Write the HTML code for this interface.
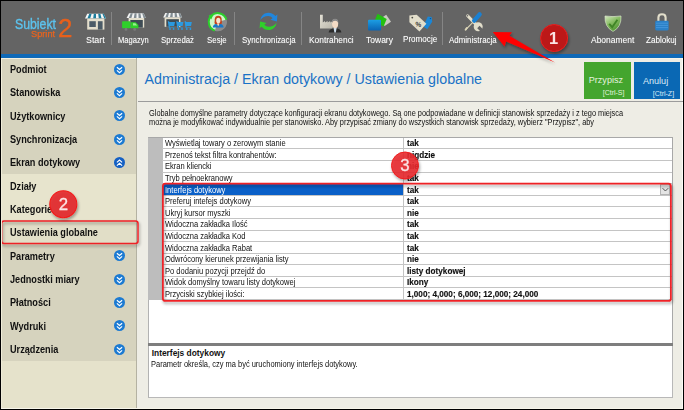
<!DOCTYPE html>
<html lang="pl">
<head>
<meta charset="utf-8">
<title>Subiekt Sprint 2 - Administracja</title>
<style>
html,body{margin:0;padding:0;}
body{width:684px;height:410px;overflow:hidden;background:#000;position:relative;font-family:"Liberation Sans",sans-serif;}
.abs{position:absolute;}
#win{position:absolute;left:1px;top:1px;width:682px;height:408px;background:#eeede5;overflow:hidden;}
#toolbar{position:absolute;left:0;top:0;width:682px;height:52.5px;background:#646464;}
#strip{position:absolute;left:0;top:52.5px;width:682px;height:4.5px;background:#0f69b7;}
.tl{position:absolute;top:33.9px;height:10px;line-height:10px;font-size:8.6px;color:#fff;white-space:nowrap;transform-origin:0 50%;text-shadow:0 0 1px rgba(255,255,255,.35);}
.sep{position:absolute;top:11px;width:1px;height:33px;background:#858585;}
#side{position:absolute;left:0;top:56.5px;width:135.2px;height:351.5px;background:#e5e2cb;border-right:1px solid #b4b2a2;}
.si{position:absolute;left:0;width:135.2px;height:23.9px;background:#d6d3be;}
.si.sub{background:#e7e4cd;}
.si span{position:absolute;left:8.7px;top:.5px;line-height:23.33px;font-size:10px;font-weight:bold;color:#111;white-space:nowrap;transform-origin:0 50%;transform:scaleX(.915);}
.chev{position:absolute;left:113px;top:6.2px;width:11px;height:11px;}
#title{position:absolute;left:143.6px;top:68px;font-size:14.25px;line-height:20px;color:#1a72c6;white-space:nowrap;}
#hr{position:absolute;left:136.5px;top:100px;width:546px;height:1px;background:#9c9c9c;}
.btn{position:absolute;top:61px;height:37px;color:#e4f3df;}
.btn .t{position:absolute;font-size:9.1px;line-height:10px;white-space:nowrap;}
.btn .k{position:absolute;font-size:7px;line-height:8px;white-space:nowrap;}
.desc{position:absolute;left:148px;font-size:8.7px;line-height:10px;color:#111;white-space:nowrap;transform-origin:0 50%;transform:scaleX(.85);}
#grid{position:absolute;left:146.8px;top:135.8px;width:524.8px;height:206.7px;background:#fff;border:1px solid #a8a8a8;border-left:1px solid #b2b2b2;border-bottom:none;box-sizing:border-box;}
#gcol{position:absolute;left:-.4px;top:0;width:14.1px;height:162.5px;background:#bdbdbd;}
.row{position:absolute;left:13.7px;width:509.1px;height:11.59px;border-bottom:1px solid #c4c4c4;box-sizing:border-box;}
.row .n{position:absolute;left:2.2px;top:.5px;font-size:8.7px;line-height:11px;white-space:nowrap;color:#111;transform-origin:0 50%;transform:scaleX(.868);}
.row .v{position:absolute;left:244.4px;top:.5px;font-size:8.3px;line-height:11px;font-weight:bold;white-space:nowrap;color:#111;transform-origin:0 50%;transform:scaleX(.985);-webkit-text-stroke:.15px #111;}
.row.sel .n{color:#fff;}
.row.sel .nb{position:absolute;left:.8px;top:0;width:239.7px;height:11.2px;background:#0a60c8;}
#dd{position:absolute;left:497.6px;top:.3px;width:10.2px;height:10.4px;background:#e4e4e4;border:1px solid #b4b4b4;box-sizing:border-box;}
#vdiv{position:absolute;left:254.2px;top:0;width:1px;height:162.5px;background:#c4c4c4;}
#split{position:absolute;left:146.8px;top:342px;width:524.8px;height:2.5px;background:#7e7e7e;}
#info{position:absolute;left:146.8px;top:344.5px;width:524.8px;height:52px;background:#fff;border:1px solid #b8b8b8;border-left:1px solid #b2b2b2;border-top:none;box-sizing:border-box;}
</style>
</head>
<body>
<div id="win">
  <div id="toolbar">
    <div class="abs" id="logo" style="left:0;top:0;width:80px;height:52px;">
      <div class="abs" style="left:14.3px;top:15.4px;font-size:13.9px;line-height:16px;color:#5cc3ee;white-space:nowrap;transform-origin:0 50%;transform:scaleX(.885);-webkit-text-stroke:.35px #5cc3ee;">Subiekt</div>
      <div class="abs" style="left:30.3px;top:26.8px;font-size:8.7px;line-height:12px;color:#e8641f;white-space:nowrap;transform-origin:0 50%;transform:scaleX(1.06);-webkit-text-stroke:.25px #e8641f;">Sprint</div>
      <div class="abs" style="left:56.8px;top:13.2px;font-size:25px;line-height:28px;color:#e8601c;white-space:nowrap;transform-origin:0 50%;transform:scaleX(1.04);-webkit-text-stroke:.3px #e8601c;">2</div>
    </div>

    <svg class="abs" style="left:-1px;top:-1px;" width="684" height="54" viewBox="0 0 684 54">
      <defs>
        <linearGradient id="gBlue" x1="0" y1="0" x2="0" y2="1"><stop offset="0" stop-color="#1c9ee4"/><stop offset="1" stop-color="#0a64b4"/></linearGradient>
        <linearGradient id="gShield" x1="0" y1="0" x2="0.6" y2="1"><stop offset="0" stop-color="#d4e8c0"/><stop offset=".5" stop-color="#86bc62"/><stop offset="1" stop-color="#4e9430"/></linearGradient>
        <linearGradient id="gFac" x1="0" y1="0" x2="1" y2="1"><stop offset="0" stop-color="#e4e1d6"/><stop offset="1" stop-color="#b9b6aa"/></linearGradient>
      </defs>
      <!-- Start -->
      <g>
        <polygon points="87.2,13.8 103.7,13.8 106.1,18.6 85,18.6" fill="#f4f6f6"/>
        <polygon points="89.3,13.8 91.6,13.8 90.2,18.6 87.4,18.6" fill="#1c7c9c"/>
        <polygon points="93.8,13.8 96,13.8 96,18.6 93.2,18.6" fill="#1c7c9c"/>
        <polygon points="98.2,13.8 100.4,13.8 101.6,18.6 98.8,18.6" fill="#1c7c9c"/>
        <polygon points="102.4,13.8 103.7,13.8 106.1,18.6 104.3,18.6" fill="#1c7c9c"/>
        <rect x="87.2" y="18.6" width="17.2" height="11" fill="#e4dfcd"/>
        <rect x="89.3" y="21.2" width="6.5" height="5.8" fill="#4c5c68"/>
        <rect x="97.9" y="21.2" width="4.7" height="8.4" fill="#4c5c68"/>
      </g>
      <!-- Magazyn -->
      <g>
        <polygon points="129,13.3 143.7,13.3 145.8,18 126.6,18" fill="#f2f3f3"/>
        <polygon points="130.8,13.3 132.8,13.3 131.4,18 128.8,18" fill="#818c92"/>
        <polygon points="134.6,13.3 136.6,13.3 136.4,18 133.8,18" fill="#818c92"/>
        <polygon points="138.4,13.3 140.4,13.3 141.2,18 138.6,18" fill="#818c92"/>
        <polygon points="142.2,13.3 143.7,13.3 145.8,18 143.6,18" fill="#818c92"/>
        <rect x="128.6" y="18" width="15.6" height="9.6" fill="#e4dfcd"/>
        <rect x="130.3" y="20" width="12.5" height="7.6" fill="#3e4b54"/>
        <rect x="122.1" y="21.2" width="8.2" height="7" rx=".6" fill="#2fd02a"/>
        <path d="M130.6 28.2 L130.6 22.2 L135.6 22.2 L138.4 25 L138.4 28.2 Z" fill="#2fd02a"/>
        <path d="M133 23.2 L135.3 23.2 L137.2 25.4 L133 25.4 Z" fill="#9cf090"/>
        <circle cx="126" cy="29.4" r="1.4" fill="#7c7c7c"/>
        <circle cx="134.7" cy="29.4" r="1.4" fill="#7c7c7c"/>
      </g>
      <!-- Sprzedaz -->
      <g>
        <polygon points="165.3,13 180,13 182.1,17.4 163.2,17.4" fill="#f2f3f3"/>
        <polygon points="167,13 169,13 167.8,17.4 165.2,17.4" fill="#818c92"/>
        <polygon points="170.8,13 172.8,13 172.6,17.4 170,17.4" fill="#818c92"/>
        <polygon points="174.6,13 176.6,13 177.4,17.4 174.8,17.4" fill="#818c92"/>
        <polygon points="178.4,13 180,13 182.1,17.4 179.8,17.4" fill="#818c92"/>
        <rect x="164.6" y="17.4" width="15.8" height="9.4" fill="#e4dfcd"/>
        <rect x="166.3" y="19.2" width="12.6" height="7.6" fill="#3e4b54"/>
        <g fill="#2b9ae0">
          <path d="M167.8 21.2 L169 21.2 L169.4 22 L175 22 L174.2 26 L169.8 26 L169.6 27.4 L174.4 27.4 L174.4 28 L168.8 28 Z"/>
          <circle cx="170" cy="29" r=".9"/><circle cx="173.6" cy="29" r=".9"/>
          <path d="M176.2 21.2 L177.4 21.2 L177.8 22 L183.4 22 L182.6 26 L178.2 26 L178 27.4 L182.8 27.4 L182.8 28 L177.2 28 Z"/>
          <circle cx="178.4" cy="29" r=".9"/><circle cx="182" cy="29" r=".9"/>
          <path d="M184.6 21.2 L185.8 21.2 L186.2 22 L191.8 22 L191 26 L186.6 26 L186.4 27.4 L191.2 27.4 L191.2 28 L185.6 28 Z"/>
          <circle cx="186.8" cy="29" r=".9"/><circle cx="190.4" cy="29" r=".9"/>
        </g>
      </g>
      <!-- Sesje -->
      <g>
        <circle cx="217.7" cy="22" r="8.6" fill="#cdf6cb"/>
        <path d="M217.7 22 L226.6 19.5 A9.3 9.3 0 0 1 214.8 30.8 Z" fill="#8c8c8c"/>
        <path d="M214.8 30.6 A9 9 0 1 1 226.4 19.6" fill="none" stroke="#2bd02b" stroke-width="2"/>
        <path d="M208.6 15.2 L213.6 14.6 L211.2 19.4 Z" fill="#2bd02b"/>
        <ellipse cx="218.2" cy="19.5" rx="3.5" ry="3.8" fill="#c4421c"/>
        <path d="M214.8 20.6 Q213.8 23.6 215.4 24.4 L221 24.4 Q222.6 23.6 221.6 20.6 Z" fill="#c4421c"/>
        <ellipse cx="218.3" cy="20.6" rx="2.1" ry="2.8" fill="#f6e4d2"/>
        <path d="M212.8 27.4 Q213 24.4 216.4 24 L218.2 26 L220 24 Q223.4 24.4 223.6 27.4 Z" fill="#1a78c8"/>
        <path d="M217 23.4 L219.4 23.4 L218.2 26.2 Z" fill="#f6e4d2"/>
      </g>
      <!-- Sync -->
      <g>
        <path id="arc" d="M260.4 20 C261 15.5 264.5 12.7 268.4 12.7 C271.4 12.7 273.8 14 275.4 16 L277.4 14.6 L276.9 21.4 L270.4 19.8 L272.6 18.2 C271.6 16.8 270 16 268.2 16 C265 16 262.4 17.6 260.4 20 Z" fill="#2186dc"/>
        <path d="M260.4 20 C261 15.5 264.5 12.7 268.4 12.7 C271.4 12.7 273.8 14 275.4 16 L277.4 14.6 L276.9 21.4 L270.4 19.8 L272.6 18.2 C271.6 16.8 270 16 268.2 16 C265 16 262.4 17.6 260.4 20 Z" fill="#2fd02a" transform="rotate(180 268.5 21.4)"/>
      </g>
      <!-- Kontrahenci -->
      <g>
        <path d="M320 28.6 L320 14.8 L322.8 14.8 L322.8 22.4 L325 21 L325 22.6 L327.6 21 L327.6 22.6 L330.2 21 L330.2 22.6 L332.8 21 L332.8 28.6 Z" fill="url(#gFac)"/>
        <path d="M328.6 32.4 Q328.8 29.4 332.6 28.4 L337.6 28.4 Q341.2 29.4 341.4 32.4 Z" fill="#2c2c2c"/>
        <path d="M333.6 28 L336.6 28 L335.8 32.4 L334.4 32.4 Z" fill="#cfe0ee"/>
        <ellipse cx="335.1" cy="23.6" rx="3.1" ry="4.7" fill="#f4dcc6"/>
        <path d="M332 23 Q331.6 18.8 335.1 18.8 Q338.6 18.8 338.2 23 Q337.6 20.8 335.1 20.8 Q332.6 20.8 332 23 Z" fill="#8a8a8a"/>
      </g>
      <!-- Towary -->
      <g>
        <polygon points="386.2,14.8 391,21.7 384.6,25.9 380,19" fill="#c9c9c1"/>
        <polygon points="377.6,13.8 386.7,19 383.6,26.4 374.4,21.2" fill="#22c010"/>
        <rect x="368" y="19.8" width="13" height="10.6" rx="1" fill="url(#gBlue)"/>
      </g>
      <!-- Promocje -->
      <g>
        <polygon points="427.8,16.4 431.6,16.9 432.2,21.7 427.3,29.2 423.2,26.6" fill="#1a86d6"/>
        <circle cx="430.4" cy="18.6" r=".7" fill="#0c4c88"/>
        <polygon points="409.4,15.4 416.7,14.8 426.4,23.8 419.4,31.4 409.4,22.2" fill="#e2decb"/>
        <circle cx="412.3" cy="17.6" r=".9" fill="#4a4a44"/>
        <text x="418.4" y="26.6" font-family="Liberation Sans, sans-serif" font-size="6.8" font-weight="bold" text-anchor="middle" fill="#3c3c38" transform="rotate(8 418.4 24.3)">%</text>
      </g>
      <!-- Administracja -->
      <g>
        <path d="M467.6 15.8 L476.4 25" stroke="#e2decb" stroke-width="3" stroke-linecap="round"/>
        <circle cx="478.2" cy="26.8" r="4.5" fill="#e2decb"/>
        <path d="M478.4 27 L484.2 32.8" stroke="#646464" stroke-width="3.3"/>
        <circle cx="467.5" cy="15.7" r=".8" fill="#646464"/>
        <path d="M473.8 21.4 L466 29.4" stroke="#dcd6b8" stroke-width="1.1" stroke-linecap="round"/>
        <path d="M466.8 28 L465.6 29.8" stroke="#dcd6b8" stroke-width="1.9" stroke-linecap="round"/>
        <path d="M479.6 14.4 L474.2 20.6" stroke="#1a80d2" stroke-width="4.4" stroke-linecap="round"/>
      </g>
      <!-- Abonament -->
      <g>
        <path d="M605 16 Q613 17.2 621 16 Q621.6 27 613 31.4 Q604.4 27 605 16 Z" fill="url(#gShield)" stroke="#d8e6c8" stroke-width=".7"/>
        <path d="M609.2 23.8 L612.2 27.2 L617.4 19.8" fill="none" stroke="#3f8426" stroke-width="1.9"/>
      </g>
      <!-- Zablokuj -->
      <g>
        <path d="M658.4 21.4 L658.4 17.6 Q658.4 14.2 662 14.2 Q665.6 14.2 665.6 17.6 L665.6 21.4" fill="none" stroke="#e2decb" stroke-width="2.1"/>
        <rect x="655.2" y="20.7" width="13.5" height="9.7" rx="1.4" fill="#2a80c8"/>
        <path d="M656 23.2 H668 M656 25.4 H668 M656 27.6 H668" stroke="#4a9ade" stroke-width=".8"/>
      </g>
    </svg>
    <div class="tl" style="left:84.8px;transform:scaleX(1.03);">Start</div>
    <div class="sep" style="left:110.0px;"></div>
    <div class="tl" style="left:116.7px;transform:scaleX(0.883);">Magazyn</div>
    <div class="tl" style="left:160.3px;transform:scaleX(0.909);">Sprzedaż</div>
    <div class="tl" style="left:206px;transform:scaleX(0.916);">Sesje</div>
    <div class="sep" style="left:233.0px;"></div>
    <div class="tl" style="left:240.7px;transform:scaleX(0.92);">Synchronizacja</div>
    <div class="sep" style="left:300.0px;"></div>
    <div class="tl" style="left:307.5px;transform:scaleX(0.974);">Kontrahenci</div>
    <div class="tl" style="left:364.7px;transform:scaleX(0.99);">Towary</div>
    <div class="tl" style="left:402.3px;top:33.1px;transform:scaleX(0.942);">Promocje</div>
    <div class="sep" style="left:441.0px;"></div>
    <div class="tl" style="left:448px;transform:scaleX(0.925);">Administracja</div>
    <div class="tl" style="left:590.3px;transform:scaleX(0.987);">Abonament</div>
    <div class="tl" style="left:644.8px;transform:scaleX(0.939);">Zablokuj</div>
  </div>
  <div id="strip"></div>
  <div class="abs" style="left:0;top:57px;width:682px;height:1px;background:#f6f4ea;"></div>
  <div class="abs" style="left:681px;top:57px;width:1px;height:351px;background:#fbfaf6;"></div>
  <div class="abs" style="left:0;top:407.3px;width:682px;height:.7px;background:#f7f5ea;z-index:3"></div>

  <div id="side">
    <div class="abs" style="left:0;top:0;width:1px;height:351.5px;background:#efecd9;z-index:2"></div><div class="abs" style="left:0;top:0;width:135.2px;height:1.3px;background:#f1efe0;z-index:2"></div>
    <div class="si" style="top:0"><span>Podmiot</span><svg class="chev" viewBox="0 0 11 11"><circle cx="5.5" cy="5.5" r="5.5" fill="#1c7ad2"/><path d="M2.9 3.2 L5.5 5.5 L8.1 3.2 M2.9 6.4 L5.5 8.7 L8.1 6.4" fill="none" stroke="#fff" stroke-width="1.15"/></svg></div>
    <div class="si" style="top:23.33px"><span>Stanowiska</span><svg class="chev" viewBox="0 0 11 11"><circle cx="5.5" cy="5.5" r="5.5" fill="#1c7ad2"/><path d="M2.9 3.2 L5.5 5.5 L8.1 3.2 M2.9 6.4 L5.5 8.7 L8.1 6.4" fill="none" stroke="#fff" stroke-width="1.15"/></svg></div>
    <div class="si" style="top:46.67px"><span>Użytkownicy</span><svg class="chev" viewBox="0 0 11 11"><circle cx="5.5" cy="5.5" r="5.5" fill="#1c7ad2"/><path d="M2.9 3.2 L5.5 5.5 L8.1 3.2 M2.9 6.4 L5.5 8.7 L8.1 6.4" fill="none" stroke="#fff" stroke-width="1.15"/></svg></div>
    <div class="si" style="top:70px"><span>Synchronizacja</span><svg class="chev" viewBox="0 0 11 11"><circle cx="5.5" cy="5.5" r="5.5" fill="#1c7ad2"/><path d="M2.9 3.2 L5.5 5.5 L8.1 3.2 M2.9 6.4 L5.5 8.7 L8.1 6.4" fill="none" stroke="#fff" stroke-width="1.15"/></svg></div>
    <div class="si" style="top:93.33px"><span>Ekran dotykowy</span><svg class="chev" viewBox="0 0 11 11"><circle cx="5.5" cy="5.5" r="5.5" fill="#1560c4"/><path d="M2.9 5.4 L5.5 3.1 L8.1 5.4 M2.9 8.6 L5.5 6.3 L8.1 8.6" fill="none" stroke="#fff" stroke-width="1.15"/></svg></div>
    <div class="si sub" style="top:116.67px"><span>Działy</span></div>
    <div class="si sub" style="top:140px"><span>Kategorie</span></div>
    <div class="si" style="top:163.33px;background:#e1dec7"><span>Ustawienia globalne</span></div>
    <div class="si" style="top:186.67px"><span>Parametry</span><svg class="chev" viewBox="0 0 11 11"><circle cx="5.5" cy="5.5" r="5.5" fill="#1c7ad2"/><path d="M2.9 3.2 L5.5 5.5 L8.1 3.2 M2.9 6.4 L5.5 8.7 L8.1 6.4" fill="none" stroke="#fff" stroke-width="1.15"/></svg></div>
    <div class="si" style="top:210px"><span>Jednostki miary</span><svg class="chev" viewBox="0 0 11 11"><circle cx="5.5" cy="5.5" r="5.5" fill="#1c7ad2"/><path d="M2.9 3.2 L5.5 5.5 L8.1 3.2 M2.9 6.4 L5.5 8.7 L8.1 6.4" fill="none" stroke="#fff" stroke-width="1.15"/></svg></div>
    <div class="si" style="top:233.33px"><span>Płatności</span><svg class="chev" viewBox="0 0 11 11"><circle cx="5.5" cy="5.5" r="5.5" fill="#1c7ad2"/><path d="M2.9 3.2 L5.5 5.5 L8.1 3.2 M2.9 6.4 L5.5 8.7 L8.1 6.4" fill="none" stroke="#fff" stroke-width="1.15"/></svg></div>
    <div class="si" style="top:256.67px"><span>Wydruki</span><svg class="chev" viewBox="0 0 11 11"><circle cx="5.5" cy="5.5" r="5.5" fill="#1c7ad2"/><path d="M2.9 3.2 L5.5 5.5 L8.1 3.2 M2.9 6.4 L5.5 8.7 L8.1 6.4" fill="none" stroke="#fff" stroke-width="1.15"/></svg></div>
    <div class="si" style="top:280px;height:23.33px"><span>Urządzenia</span><svg class="chev" viewBox="0 0 11 11"><circle cx="5.5" cy="5.5" r="5.5" fill="#1c7ad2"/><path d="M2.9 3.2 L5.5 5.5 L8.1 3.2 M2.9 6.4 L5.5 8.7 L8.1 6.4" fill="none" stroke="#fff" stroke-width="1.15"/></svg></div>
  </div>

  <div id="title">Administracja / Ekran dotykowy / Ustawienia globalne</div>
  <div id="hr"></div>
  <div class="btn" style="left:583.2px;width:47px;background:#44a52e;">
    <div class="t" style="left:4.5px;top:13.4px;">Przypisz</div>
    <div class="k" style="left:18.5px;top:26.5px;">[Ctrl-S]</div>
  </div>
  <div class="btn" style="left:632.7px;width:46.3px;background:#0a68b4;color:#dcebf7;">
    <div class="t" style="left:9.2px;top:14.2px;">Anuluj</div>
    <div class="k" style="left:19px;top:27.7px;">[Ctrl-Z]</div>
  </div>

  <div class="desc" id="d1" style="top:107px;">Globalne domyślne parametry dotyczące konfiguracji ekranu dotykowego. Są one podpowiadane w definicji stanowisk sprzedaży i z tego miejsca</div>
  <div class="desc" id="d2" style="top:116px;">można je modyfikować indywidualnie per stanowisko. Aby przypisać zmiany do wszystkich stanowisk sprzedaży, wybierz "Przypisz", aby</div>

  <div id="grid">
    <div id="gcol"></div>
    <div class="row" style="top:0"><span class="n">Wyświetlaj towary o zerowym stanie</span><span class="v">tak</span></div>
    <div class="row" style="top:11.59px"><span class="n">Przenoś tekst filtra kontrahentów:</span><span class="v">nigdzie</span></div>
    <div class="row" style="top:23.18px"><span class="n">Ekran kliencki</span><span class="v">nie</span></div>
    <div class="row" style="top:34.77px"><span class="n">Tryb pełnoekranowy</span><span class="v">tak</span></div>
    <div class="row sel" style="top:46.36px"><div class="nb"></div><span class="n">Interfejs dotykowy</span><span class="v">tak</span><div id="dd"><svg class="abs" style="left:0;top:0" width="9" height="9" viewBox="0 0 9 9"><path d="M1.6 3.2 L4.4 6 L7.2 3.2" fill="none" stroke="#444" stroke-width=".9"/></svg></div></div>
    <div class="row" style="top:57.95px"><span class="n">Preferuj intefejs dotykowy</span><span class="v">tak</span></div>
    <div class="row" style="top:69.54px"><span class="n">Ukryj kursor myszki</span><span class="v">nie</span></div>
    <div class="row" style="top:81.13px"><span class="n">Widoczna zakładka Ilość</span><span class="v">tak</span></div>
    <div class="row" style="top:92.72px"><span class="n">Widoczna zakładka Kod</span><span class="v">tak</span></div>
    <div class="row" style="top:104.31px"><span class="n">Widoczna zakładka Rabat</span><span class="v">tak</span></div>
    <div class="row" style="top:115.9px"><span class="n">Odwrócony kierunek przewijania listy</span><span class="v">nie</span></div>
    <div class="row" style="top:127.49px"><span class="n">Po dodaniu pozycji przejdź do</span><span class="v">listy dotykowej</span></div>
    <div class="row" style="top:139.08px"><span class="n">Widok domyślny towaru listy dotykowej</span><span class="v">Ikony</span></div>
    <div class="row" style="top:150.67px"><span class="n">Przyciski szybkiej ilości:</span><span class="v">1,000; 4,000; 6,000; 12,000; 24,000</span></div>
    <div id="vdiv"></div>
  </div>
  <div id="split"></div>
  <div id="info">
    <div class="abs" style="left:2.9px;top:2.5px;font-size:8.4px;line-height:11px;font-weight:bold;color:#111;white-space:nowrap;">Interfejs dotykowy</div>
    <div class="desc" id="d3" style="left:2.7px;top:13.4px;transform:scaleX(.862);">Parametr określa, czy ma być uruchomiony interfejs dotykowy.</div>
  </div>

  <svg class="abs" id="ann" style="left:-1px;top:-1px;" width="684" height="410" viewBox="0 0 684 410">
    <defs>
      <filter id="sh" x="-30%" y="-30%" width="160%" height="160%"><feGaussianBlur in="SourceAlpha" stdDeviation="1.8"/><feOffset dx="1" dy="1.5"/><feComponentTransfer><feFuncA type="linear" slope=".38"/></feComponentTransfer><feMerge><feMergeNode/><feMergeNode in="SourceGraphic"/></feMerge></filter>
    </defs>
    <rect x="1.6" y="221" width="136.4" height="22.4" rx="2.5" fill="none" stroke="#ee2026" stroke-width="1.5" filter="url(#sh)"/>
    <rect x="162.9" y="183.7" width="508" height="117.2" rx="2.5" fill="none" stroke="#ee2026" stroke-width="1.75" filter="url(#sh)"/>
    <polygon points="492.8,32 512,32.2 509.4,35.7 555,62.4 506.1,41.5 504.5,46.5" fill="#ff0000" filter="url(#sh)"/>
    <g filter="url(#sh)">
      <circle cx="554.1" cy="38" r="13.5" fill="#c01818" fill-opacity=".96" stroke="#ea1c1c" stroke-width="1"/>
      <text x="553.6" y="43.9" font-family="Liberation Sans, sans-serif" font-size="16.5" font-weight="bold" text-anchor="middle" fill="#fbe4e4">1</text>
    </g>
    <g filter="url(#sh)">
      <circle cx="63.3" cy="204.2" r="13.5" fill="#e42a2e" fill-opacity=".9" stroke="#f41a1a" stroke-width="1.1"/>
      <text x="63.3" y="210.1" font-family="Liberation Sans, sans-serif" font-size="16.8" text-anchor="middle" fill="#fbe4e4" stroke="#fbe4e4" stroke-width=".3">2</text>
    </g>
    <g filter="url(#sh)">
      <circle cx="405" cy="165.5" r="13.5" fill="#e82a2e" fill-opacity=".88" stroke="#f01c1c" stroke-width="1"/>
      <text x="405" y="171.4" font-family="Liberation Sans, sans-serif" font-size="16.8" text-anchor="middle" fill="#fbe4e4" stroke="#fbe4e4" stroke-width=".3">3</text>
    </g>
  </svg>
</div>
</body>
</html>
